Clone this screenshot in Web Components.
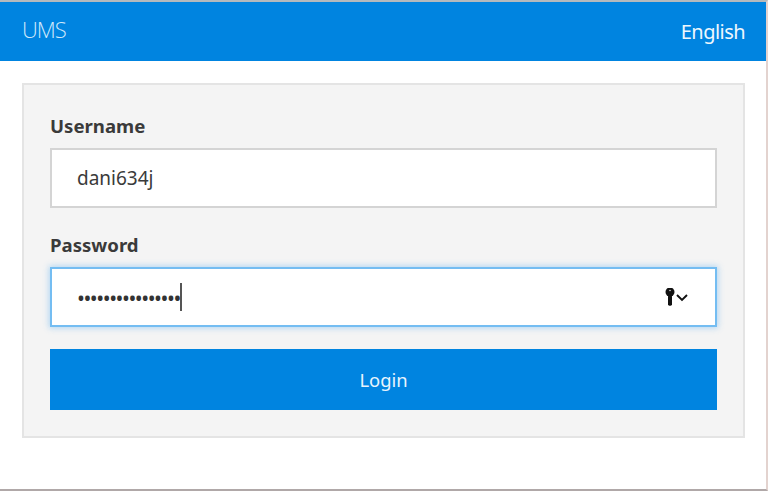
<!DOCTYPE html>
<html lang="en">
<head>
<meta charset="UTF-8">
<title>UMS</title>
<style>
  html, body { margin: 0; padding: 0; background: #fff; }
  body { font-family: "Noto Sans", "Open Sans", sans-serif; }
</style>
</head>
<body>
<ums-page>
  <ums-header slot="header">
    <span slot="brand">UMS</span>
    <span slot="lang">English</span>
  </ums-header>
  <login-panel>
    <form-field label="Username" value="dani634j"></form-field>
    <form-field label="Password" value="••••••••••••••••" focused></form-field>
    <login-button>Login</login-button>
  </login-panel>
</ums-page>

<template id="page-tpl">
  <style>
    :host {
      display: block; box-sizing: border-box; width: 768px; height: 491px;
      border-top: 2px solid #b4b9bd;
      border-right: 2px solid #e3d3cf;
      border-bottom: 2px solid #b0a8a8;
      overflow: hidden; background: #fff;
    }
  </style>
  <slot name="header"></slot>
  <slot></slot>
</template>

<template id="header-tpl">
  <style>
    :host {
      display: flex; justify-content: space-between; align-items: center;
      height: 59px; padding: 0 21px 0 22px; background: #0084e0; color: #fff;
    }
    .brand { font: 300 22px "Open Sans", sans-serif; letter-spacing: -1px; color: #cfe8fb; margin-top: -5px; }
    .lang { font: 400 20px "Noto Sans", sans-serif; letter-spacing: -.55px; color: #eef7fd; margin-top: -1px; }
  </style>
  <div class="brand"><slot name="brand"></slot></div>
  <div class="lang"><slot name="lang"></slot></div>
</template>

<template id="panel-tpl">
  <style>
    :host {
      display: flex; flex-direction: column; box-sizing: border-box;
      width: 723px; height: 355px; margin: 22px 0 0 22px; padding: 26px 26px 0 26px;
      background: #f4f4f4; border: 2px solid #e4e4e4;
    }
  </style>
  <slot></slot>
</template>

<template id="field-tpl">
  <style>
    :host { display: block; margin-bottom: 22px; color: #3a3a3a; }
    label { display: block; height: 37px; font: 700 18.6px/30px "Noto Sans", sans-serif; }
    .box {
      display: flex; align-items: center; box-sizing: border-box; height: 60px;
      padding: 0 27px 0 25px; background: #fff; border: 2px solid #d4d4d4;
      font: 400 19px "Noto Sans", sans-serif; color: #3a3a3a;
    }
    :host([focused]) .box {
      border-color: #74bdf2; box-shadow: 0 0 6px 1px rgba(90,175,240,.45);
    }
    :host([focused]) .value { font-size: 21px; letter-spacing: -1.47px; color: #333; line-height: 1; margin-top: 3px; }
    .caret { display: none; width: 2px; height: 28px; background: #555; }
    :host([focused]) .caret { display: block; }
    svg { display: none; margin-left: auto; }
    :host([focused]) svg { display: block; }
  </style>
  <label></label>
  <div class="box">
    <span class="value"></span><span class="caret"></span>
    <svg width="24" height="18" viewBox="0 0 24 18">
      <circle cx="6" cy="4" r="4.5" fill="#111"/>
      <circle cx="6" cy="2.5" r=".8" fill="#ddd"/>
      <rect x="4" y="7" width="4" height="10.7" rx="1.4" fill="#111"/>
      <path d="M13 7l5 5 5-5" fill="none" stroke="#111" stroke-width="1.9"/>
    </svg>
  </div>
</template>

<template id="button-tpl">
  <style>
    :host {
      display: flex; align-items: center; justify-content: center;
      height: 61px; background: #0084e0; color: #e8f4fd;
      font: 400 18.4px "Noto Sans", sans-serif;
    }
  </style>
  <slot></slot>
</template>

<script>
  function tpl(id) {
    return document.getElementById(id).content.cloneNode(true)
  }
  class UmsPage extends HTMLElement {
    constructor() { super(); this.attachShadow({mode: 'open'}).append(tpl('page-tpl')) }
  }
  class UmsHeader extends HTMLElement {
    constructor() { super(); this.attachShadow({mode: 'open'}).append(tpl('header-tpl')) }
  }
  class LoginPanel extends HTMLElement {
    constructor() { super(); this.attachShadow({mode: 'open'}).append(tpl('panel-tpl')) }
  }
  class FormField extends HTMLElement {
    connectedCallback() {
      if (this.shadowRoot) return
      this.attachShadow({mode: 'open'}).append(tpl('field-tpl'))
      this.shadowRoot.querySelector('label').textContent = this.getAttribute('label')
      this.shadowRoot.querySelector('.value').textContent = this.getAttribute('value')
    }
  }
  class LoginButton extends HTMLElement {
    constructor() { super(); this.attachShadow({mode: 'open'}).append(tpl('button-tpl')) }
  }
  customElements.define('ums-page', UmsPage)
  customElements.define('ums-header', UmsHeader)
  customElements.define('login-panel', LoginPanel)
  customElements.define('form-field', FormField)
  customElements.define('login-button', LoginButton)
</script>
</body>
</html>
